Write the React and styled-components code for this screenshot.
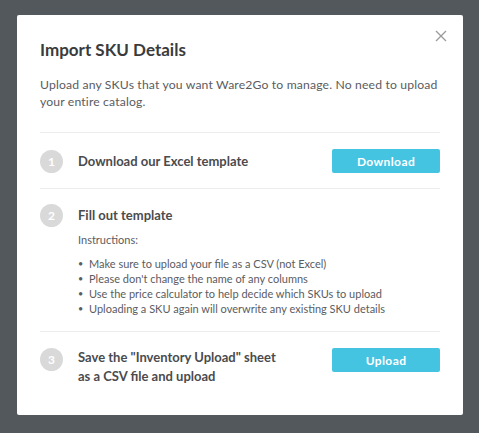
import React from "react";
import styled, { createGlobalStyle } from "styled-components";

const Global = createGlobalStyle`
  html, body { margin: 0; padding: 0; }
  body { background: #53585c; font-family: Lato, "Noto Sans", sans-serif; }
`;

const Backdrop = styled.div`
  width: 479px;
  height: 433px;
  padding: 15px 16px 0 17px;
  box-sizing: border-box;
  background: #53585c;
`;

const Modal = styled.div`
  position: relative;
  width: 446px;
  height: 400px;
  background: #fff;
  border-radius: 2px;
  padding: 25px 23px 0 23px;
  box-sizing: border-box;
`;

const Close = styled.button`
  position: absolute;
  top: 13px;
  right: 14px;
  width: 16px;
  height: 16px;
  padding: 0;
  border: none;
  background: transparent;
  display: flex;
  align-items: center;
  justify-content: center;
`;

const Title = styled.h1`
  margin: 0;
  font-size: 17px;
  font-weight: 700;
  color: #3a3b3d;
  line-height: 20px;
`;

const Description = styled.p`
  margin: 16px 0 0;
  font-size: 12.2px;
  line-height: 17px;
  color: #5a5c5f;
  letter-spacing: 0.15px;
`;

const Steps = styled.div`
  margin-top: 22px;
  border-top: 1px solid #ececec;
`;

const Step = styled.div`
  display: grid;
  grid-template-columns: 38px 1fr auto;
  align-items: ${(p) => (p.$top ? "start" : "center")};
  padding: ${(p) => p.$pad};
  border-top: ${(p) => (p.$first ? "none" : "1px solid #ececec")};
`;

const Num = styled.div`
  width: 23px;
  height: 23px;
  border-radius: 50%;
  background: #d9d9d9;
  color: #fff;
  font-size: 12px;
  font-weight: 700;
  display: flex;
  align-items: center;
  justify-content: center;
`;

const StepTitle = styled.div`
  font-size: 13px;
  font-weight: 700;
  color: #4a4b4e;
  line-height: ${(p) => p.$lh || "19px"};
`;

const Action = styled.button`
  width: 108px;
  height: 24px;
  border: none;
  border-radius: 2px;
  background: #45c4e2;
  color: #fff;
  font-family: inherit;
  font-size: 12px;
  font-weight: 700;
  letter-spacing: 0.4px;
  cursor: pointer;
`;

const Instructions = styled.div`
  margin-top: 5px;
  font-size: 11px;
  line-height: 15px;
  color: #5a5c5f;
`;

const List = styled.ul`
  margin: 9px 0 0;
  padding: 0;
  list-style: none;
`;

const Item = styled.li`
  font-size: 11px;
  line-height: 15px;
  color: #5a5c5f;
  display: flex;
  &::before {
    content: "•";
    width: 11px;
    font-size: 9px;
  }
`;

export default function App() {
  return (
    <>
      <Global />
      <Backdrop>
        <Modal>
          <Close aria-label="Close">
            <svg width="12" height="12" viewBox="0 0 12 12">
              <path d="M1 1L11 11M11 1L1 11" stroke="#9a9a9a" strokeWidth="1.3" />
            </svg>
          </Close>
          <Title>Import SKU Details</Title>
          <Description>
            Upload any SKUs that you want Ware2Go to manage. No need to upload your entire catalog.
          </Description>
          <Steps>
            <Step $first $pad="16px 0 15px">
              <Num>1</Num>
              <StepTitle>Download our Excel template</StepTitle>
              <Action>Download</Action>
            </Step>
            <Step $top $pad="15px 0 15px">
              <Num>2</Num>
              <div>
                <StepTitle $lh="23px">Fill out template</StepTitle>
                <Instructions>Instructions:</Instructions>
                <List>
                  <Item>Make sure to upload your file as a CSV (not Excel)</Item>
                  <Item>Please don't change the name of any columns</Item>
                  <Item>Use the price calculator to help decide which SKUs to upload</Item>
                  <Item>Uploading a SKU again will overwrite any existing SKU details</Item>
                </List>
              </div>
              <span />
            </Step>
            <Step $top $pad="16px 0">
              <Num>3</Num>
              <StepTitle>
                Save the "Inventory Upload" sheet
                <br />
                as a CSV file and upload
              </StepTitle>
              <Action>Upload</Action>
            </Step>
          </Steps>
        </Modal>
      </Backdrop>
    </>
  );
}
